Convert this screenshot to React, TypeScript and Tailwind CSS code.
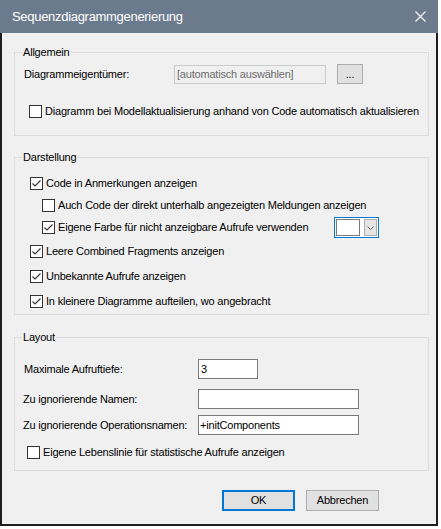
import React from 'react'

function Check({ checked }: { checked?: boolean }) {
  return (
    <span className="flex h-[13px] w-[13px] shrink-0 items-center justify-center border border-[#333333] bg-white">
      {checked && (
        <svg width="11" height="11" viewBox="0 0 11 11">
          <path d="M1.5 5.5 L4 8 L9.5 2.5" fill="none" stroke="#333333" strokeWidth="1.1" />
        </svg>
      )}
    </span>
  )
}

function CheckRow({
  checked,
  label,
  className,
  children,
}: {
  checked?: boolean
  label: string
  className?: string
  children?: React.ReactNode
}) {
  return (
    <div className={`flex h-[13px] items-center ${className ?? ''}`}>
      <Check checked={checked} />
      <span className="ml-[3px] whitespace-nowrap leading-[13px]">{label}</span>
      {children}
    </div>
  )
}

function Group({
  title,
  className,
  children,
}: {
  title: string
  className?: string
  children: React.ReactNode
}) {
  return (
    <div className={`relative ml-[12px] w-[415px] border border-[#dcdcdc] ${className ?? ''}`}>
      <span className="absolute -top-[8px] left-[7px] bg-[#f0f0f0] px-[1px] leading-[14px]">
        {title}
      </span>
      {children}
    </div>
  )
}

export default function App() {
  return (
    <div
      className="h-[529px] w-[441px] bg-white text-[11px] tracking-[-0.2px] text-black"
      style={{ fontFamily: '"Liberation Sans", Arial, sans-serif' }}
    >
      <div className="flex h-[526px] w-[438px] flex-col border-x-2 border-b-2 border-[#1e1e1e] bg-[#f0f0f0]">
        <div className="-mx-[2px] flex h-[33px] shrink-0 items-center justify-between bg-[#6b7a8c] pl-[12px] pr-[12px]">
          <span className="text-[13px] tracking-[-0.3px] text-white">Sequenzdiagrammgenerierung</span>
          <svg width="11" height="11" viewBox="0 0 11 11">
            <path d="M0.5 0.5 L10.5 10.5 M10.5 0.5 L0.5 10.5" stroke="white" strokeWidth="1.1" />
          </svg>
        </div>

        <Group title="Allgemein" className="mt-[19px] pb-[17px] pl-[9px] pt-[11px]">
          <div className="flex h-[20px] items-center">
            <span className="w-[150px]">Diagrammeigentümer:</span>
            <div className="flex h-[19px] w-[152px] items-center border border-[#cccccc] bg-[#f0f0f0] pl-[2px] text-[#6d6d6d]">
              [automatisch auswählen]
            </div>
            <button className="ml-[11px] flex h-[20px] w-[26px] items-center justify-center border border-[#adadad] bg-[#e1e1e1] leading-none">
              ...
            </button>
          </div>
          <CheckRow
            className="ml-[5px] mt-[21px]"
            label="Diagramm bei Modellaktualisierung anhand von Code automatisch aktualisieren"
          />
        </Group>

        <Group title="Darstellung" className="mt-[21px] pb-[6px] pl-[15px] pt-[19px]">
          <CheckRow checked label="Code in Anmerkungen anzeigen" />
          <CheckRow
            className="ml-[12px] mt-[9px]"
            label="Auch Code der direkt unterhalb angezeigten Meldungen anzeigen"
          />
          <CheckRow
            checked
            className="ml-[12px] mt-[9px]"
            label="Eigene Farbe für nicht anzeigbare Aufrufe verwenden"
          >
            <div className="-my-[4px] ml-auto mr-[49px] flex h-[21px] w-[45px] items-center border border-[#0078d7] bg-white px-[1px]">
              <div className="h-[17px] w-[24px] border border-[#7a7a7a] bg-white" />
              <div className="ml-auto flex h-[17px] w-[13px] items-center justify-center border border-[#adadad] bg-[#e5e5e5]">
                <svg width="7" height="4" viewBox="0 0 7 4">
                  <path d="M0.5 0.5 L3.5 3.5 L6.5 0.5" fill="none" stroke="#606060" strokeWidth="1" />
                </svg>
              </div>
            </div>
          </CheckRow>
          <CheckRow checked className="mt-[11px]" label="Leere Combined Fragments anzeigen" />
          <CheckRow checked className="mt-[12px]" label="Unbekannte Aufrufe anzeigen" />
          <CheckRow
            checked
            className="mt-[12px]"
            label="In kleinere Diagramme aufteilen, wo angebracht"
          />
        </Group>

        <Group title="Layout" className="mt-[22px] pb-[11px] pl-[8px] pt-[21px]">
          <div className="flex h-[20px] items-center">
            <span className="ml-[1px] w-[174px] whitespace-nowrap">Maximale Aufruftiefe:</span>
            <div className="flex h-[20px] w-[60px] items-center border border-[#7a7a7a] bg-white pl-[2px]">
              3
            </div>
          </div>
          <div className="mt-[10px] flex h-[20px] items-center">
            <span className="w-[175px] whitespace-nowrap">Zu ignorierende Namen:</span>
            <div className="h-[20px] w-[161px] border border-[#7a7a7a] bg-white" />
          </div>
          <div className="mt-[6px] flex h-[20px] items-center">
            <span className="w-[175px] whitespace-nowrap">Zu ignorierende Operationsnamen:</span>
            <div className="flex h-[20px] w-[161px] items-center border border-[#7a7a7a] bg-white pl-[1px]">
              +initComponents
            </div>
          </div>
          <CheckRow
            className="ml-[4px] mt-[11px]"
            label="Eigene Lebenslinie für statistische Aufrufe anzeigen"
          />
        </Group>

        <div className="ml-[220px] mt-[19px] flex gap-[11px]">
          <button className="flex h-[21px] w-[73px] items-center justify-center border-2 border-[#0078d7] bg-[#e1e1e1]">
            OK
          </button>
          <button className="flex h-[21px] w-[73px] items-center justify-center border border-[#adadad] bg-[#e1e1e1]">
            Abbrechen
          </button>
        </div>
      </div>
    </div>
  )
}
